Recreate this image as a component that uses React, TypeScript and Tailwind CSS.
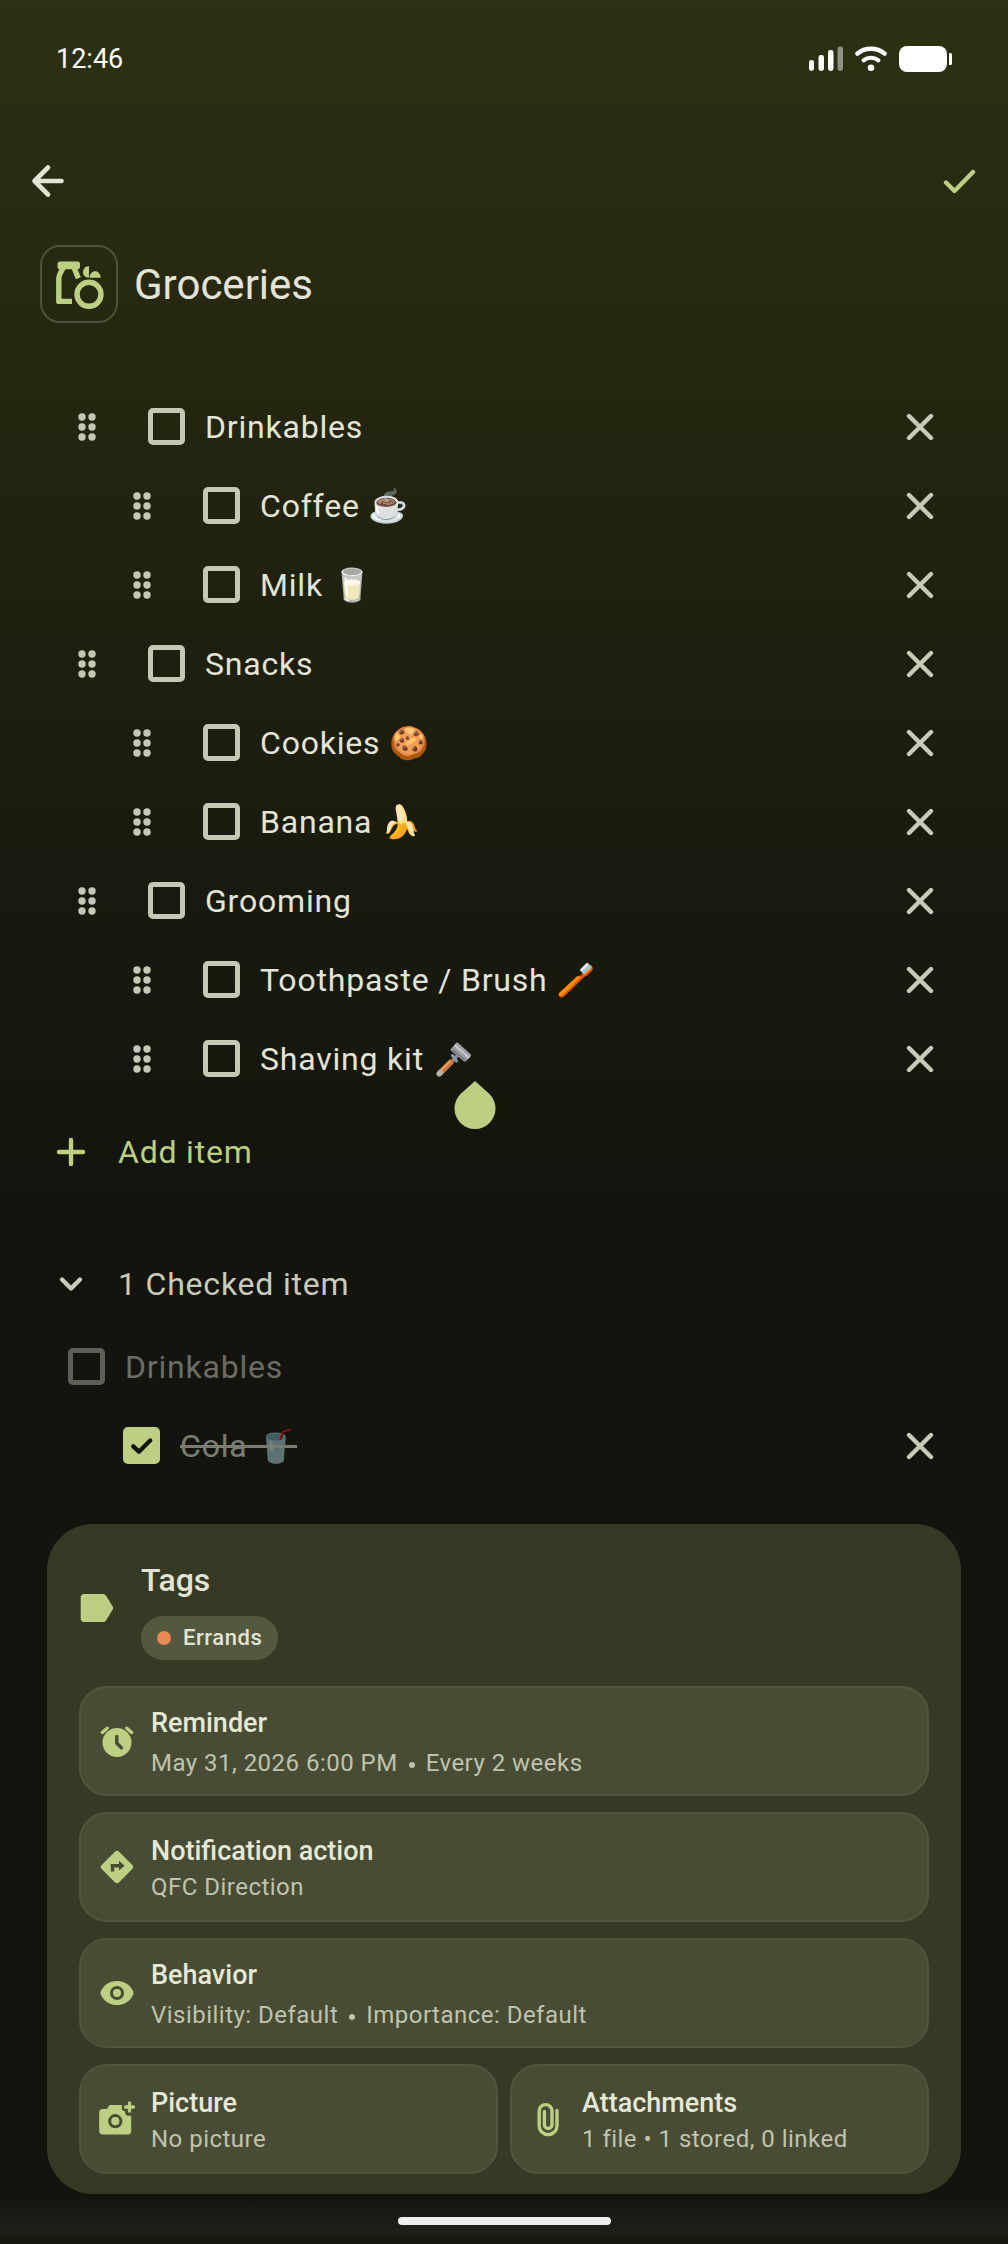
/**
 * Checklist editor: title, draggable items, checked section and the
 * details panel (tags, reminder, action, behavior, picture, attachments).
 */

import { type ReactNode, useState } from "react";

interface Item {
  id: string;
  text: string;
  child?: boolean;
  razor?: boolean;
  caret?: boolean;
}

const ITEMS: Item[] = [
  { id: "drinkables", text: "Drinkables" },
  { id: "coffee", text: "Coffee ☕", child: true },
  { id: "milk", text: "Milk 🥛", child: true },
  { id: "snacks", text: "Snacks" },
  { id: "cookies", text: "Cookies 🍪", child: true },
  { id: "banana", text: "Banana 🍌", child: true },
  { id: "grooming", text: "Grooming" },
  { id: "toothpaste", text: "Toothpaste / Brush 🪥", child: true },
  { id: "shaving", text: "Shaving kit", child: true, razor: true, caret: true },
];

/* ---------- icons ---------- */

function SignalIcon() {
  return (
    <svg width="34" height="26" viewBox="0 0 34 26" fill="#fff" aria-hidden>
      <rect x="0" y="14" width="5" height="11" rx="2.4" />
      <rect x="9.5" y="9" width="5.5" height="16" rx="2.4" />
      <rect x="19" y="4" width="5.5" height="21" rx="2.4" />
      <rect x="28.5" y="0.5" width="5.5" height="24.5" rx="2.4" fill="#8f9182" />
    </svg>
  );
}

function WifiIcon() {
  return (
    <svg width="32" height="26" viewBox="1 0 32 26" fill="none" stroke="#fff" strokeLinecap="round" aria-hidden>
      <path d="M3.4 7.6C11 1.2 23 1.2 30.6 7.6" strokeWidth="4.4" />
      <path d="M9.6 14.3C13.8 10.9 20.2 10.9 24.4 14.3" strokeWidth="4.2" />
      <circle cx="17" cy="21.7" r="3.3" fill="#fff" stroke="none" />
    </svg>
  );
}

function BatteryIcon() {
  return (
    <svg width="53" height="26" viewBox="0 0 53 26" fill="#fff" aria-hidden>
      <rect x="0" y="0" width="48" height="26" rx="8" />
      <path d="M50 7h1.5c1 0 1.5.8 1.5 1.8v8.4c0 1-.5 1.8-1.5 1.8H50z" />
    </svg>
  );
}

function GroceryIcon() {
  return (
    <svg width="50" height="50" viewBox="0 0 50 50" fill="none" stroke="#bccf83" strokeWidth="5.4" aria-hidden>
      <rect x="3.5" y="2.5" width="22.5" height="7.8" rx="2.5" fill="#bccf83" stroke="none" />
      <path d="M9.5 8C8 12.5 4.8 14.500 4.800 19.500V42.400H18" strokeLinejoin="round" />
      <path d="M20 8.5l4.300 10.800" />
      <circle cx="35" cy="35.3" r="12" />
      <path d="M35 7.2v11.3c-3.8 0-6-2.1-6-5.3 0-3.3 2.1-6 6-6z" fill="#bccf83" stroke="none" />
      <path d="M35.5 18.7c.3-4 2.6-6.4 5.7-6.4 3 0 5 2.6 5.6 6.4z" fill="#bccf83" stroke="none" />
    </svg>
  );
}

function DragIcon() {
  return (
    <svg width="18" height="28" viewBox="0 0 18 28" fill="#c6c8b6" aria-hidden>
      {[4, 14, 24].map((y) => (
        <g key={y}>
          <circle cx="4" cy={y} r="3.7" />
          <circle cx="14" cy={y} r="3.7" />
        </g>
      ))}
    </svg>
  );
}

function CloseIcon() {
  return (
    <svg width="28" height="28" viewBox="0 0 28 28" fill="none" stroke="#c9cbb9" strokeWidth="4.4" strokeLinecap="round" aria-hidden>
      <path d="M3 3l22 22M25 3L3 25" />
    </svg>
  );
}

function RazorIcon() {
  return (
    <svg width="36" height="36" viewBox="0 0 36 36" className="ml-3 inline-block align-[-8px]" fill="none" strokeLinecap="round" role="img" aria-label="razor">
      <path d="M15.5 20L22 13" stroke="#75838c" strokeWidth="3.6" />
      <path d="M16.5 13.5l4 5.500" stroke="#8d989f" strokeWidth="3" />
      <path d="M4.5 30.5L14.5 20.5" stroke="#c9763a" strokeWidth="6" />
      <path d="M5.5 28L14 19.5" stroke="#eaa35f" strokeWidth="1.8" />
      <path d="M3.2 31.8L4.4 30.6" stroke="#b4b1aa" strokeWidth="5.6" />
      <path d="M15.2 6.5L19.8 1.200c.8-.8 1.700-.8 2.500-.1L34.500 12c.8.8.8 1.700.1 2.500L30.200 19c-.8.8-1.800.8-2.600.1L15.300 9c-.8-.8-.8-1.700-.1-2.500z" fill="#9a9da1" />
      <path d="M19.5 3.8L32.5 15.2" stroke="#c3c5c8" strokeWidth="2.4" />
      <path d="M17 8.2L29 18" stroke="#6f7377" strokeWidth="1.4" />
    </svg>
  );
}

function LabelIcon() {
  return (
    <svg width="34" height="28" viewBox="0 0 34 28" className="mb-1" fill="#bccf83" aria-hidden>
      <path d="M5 0h19c1.300 0 2.300.6 3 1.600l6.400 10.400c.9 1.300.9 2.700 0 4L27 26.400c-.7 1-1.700 1.600-3 1.600H5c-2 0-3.300-1.400-3.300-3.300V3.300C1.700 1.400 3 0 5 0z" />
    </svg>
  );
}

function AlarmIcon() {
  return (
    <svg width="36" height="36" viewBox="0 0 36 36" fill="none" strokeLinecap="round" strokeLinejoin="round" aria-hidden>
      <circle cx="18" cy="19.5" r="14.5" fill="#bccf83" />
      <path d="M3.3 9.5L8.2 5.2M32.7 9.5L27.8 5.2" stroke="#bccf83" strokeWidth="3.4" />
      <path d="M17.8 13.5v6.700l4.600 4.600" stroke="#484c34" strokeWidth="3.4" />
    </svg>
  );
}

function DirectionIcon() {
  return (
    <svg width="36" height="36" viewBox="0 0 36 36" aria-hidden>
      <path d="M15.9 2.7c1.200-1.200 3-1.200 4.200 0l13.200 13.200c1.200 1.200 1.200 3 0 4.200L20.100 33.300c-1.200 1.200-3 1.200-4.200 0L2.700 20.100c-1.200-1.200-1.200-3 0-4.200z" fill="#bccf83" />
      <path d="M13.5 22.5v-5.800h7" fill="none" stroke="#484c34" strokeWidth="3.4" />
      <path d="M20 11.8l5.600 4.900L20 21.600z" fill="#484c34" />
    </svg>
  );
}

function EyeIcon() {
  return (
    <svg width="36" height="36" viewBox="0 0 36 36" aria-hidden>
      <path d="M18 6c7.300 0 13.300 4 16.300 10.600.4 1 .4 1.800 0 2.800C31.300 26 25.300 30 18 30S4.700 26 1.700 19.400c-.4-1-.4-1.800 0-2.800C4.700 10 10.700 6 18 6z" fill="#bccf83" />
      <circle cx="18" cy="18" r="5.5" fill="none" stroke="#484c34" strokeWidth="3" />
    </svg>
  );
}

function CameraIcon() {
  return (
    <svg width="36" height="36" viewBox="0 0 36 36" aria-hidden>
      <path d="M11.5 4h11.300v2.800c0 2 1.200 3.400 3.300 3.400v1.200c0 2 1.400 3.300 3.400 3.300h2.700v15.600c0 1.900-1.300 3.200-3.200 3.200H3.400c-1.900 0-3.200-1.300-3.200-3.200V11.100c0-1.900 1.300-3.200 3.200-3.200h4.500l2-2.800c.4-.7.9-1.100 1.600-1.100z" fill="#bccf83" />
      <path d="M30.5 2v8M26.5 6h8" stroke="#bccf83" strokeWidth="3.3" strokeLinecap="round" />
      <circle cx="16.3" cy="20.2" r="5.6" fill="none" stroke="#484c34" strokeWidth="3" />
    </svg>
  );
}

function ClipIcon() {
  return (
    <svg width="36" height="36" viewBox="0 0 36 36" fill="none" stroke="#bccf83" strokeWidth="3.4" strokeLinecap="round" aria-hidden>
      <path d="M27 9.5v15.200a8.900 8.900 0 0 1-17.800 0V10a6.400 6.400 0 0 1 12.800 0v13.700a3.800 3.800 0 0 1-7.600 0V10.500" />
    </svg>
  );
}

/* ---------- rows ---------- */

interface CheckProps {
  id: string;
  checked: boolean;
  disabled?: boolean;
  onToggle?: () => void;
}

function Check({ id, checked, disabled, onToggle }: CheckProps) {
  return (
    <span className="grid size-[37px] shrink-0">
      <input
        id={id}
        type="checkbox"
        checked={checked}
        disabled={disabled}
        onChange={onToggle}
        className="peer col-start-1 row-start-1 size-[37px] appearance-none rounded-[5px] border-[5px] border-[#c6c8b6] checked:border-[#bccf83] checked:bg-[#bccf83] disabled:border-[#5d5e55]"
      />
      <svg
        viewBox="0 0 36 36"
        className="pointer-events-none invisible col-start-1 row-start-1 size-[37px] peer-checked:visible"
        fill="none"
        stroke="#13140d"
        strokeWidth="4.2"
        strokeLinecap="round"
        strokeLinejoin="round"
        aria-hidden
      >
        <path d="M10 18.8l5.500 5.200L26.500 13.200" />
      </svg>
    </span>
  );
}

function RemoveButton({ label }: { label: string }) {
  return (
    <button type="button" aria-label={`Remove ${label}`} className="ml-auto grid size-12 place-items-center">
      <CloseIcon />
    </button>
  );
}

function CaretHandle() {
  return (
    <svg width="42" height="48" viewBox="0 0 42 48" className="absolute top-full -right-6 mt-0.5" fill="#bccf83" aria-hidden>
      <path d="M21 0L35.5 13a20.5 20.5 0 1 1-29 0z" />
    </svg>
  );
}

function ItemRow({ item }: { item: Item }) {
  const [checked, setChecked] = useState(false);
  return (
    <li className={`flex h-[79px] items-center pr-16 ${item.child ? "pl-[133px]" : "pl-[78px]"}`}>
      <button type="button" aria-label={`Reorder ${item.text}`} className="mr-[52px] cursor-grab">
        <DragIcon />
      </button>
      <Check id={item.id} checked={checked} onToggle={() => setChecked(!checked)} />
      <label htmlFor={item.id} className="relative ml-5 text-[32px] leading-10 tracking-wide">
        {item.text}
        {item.razor && <RazorIcon />}
        {item.caret && <CaretHandle />}
      </label>
      <RemoveButton label={item.text} />
    </li>
  );
}

/* ---------- details panel ---------- */

interface DetailCardProps {
  icon: ReactNode;
  title: string;
  parts: string[];
}

function DetailCard({ icon, title, parts }: DetailCardProps) {
  const split = parts.length > 1;
  return (
    <button
      type="button"
      className="flex h-[110px] w-full items-center gap-4 rounded-[28px] border-2 border-[#50553d] bg-[#484c34] px-[18px] text-left"
    >
      {icon}
      <span className={`flex min-w-0 flex-col pt-1 ${split ? "gap-2" : "gap-1"}`}>
        <span className="text-[27px] leading-8 font-medium text-[#e6e8d6]">{title}</span>
        <span className="flex items-center gap-[11px] text-2xl leading-8 tracking-[0.02em] text-[#c0c3ad]">
          {parts.map((part, i) => (
            <span key={part} className="flex items-center gap-[11px]">
              {i > 0 && <span className="mt-1 size-1.5 rounded-full bg-[#c0c3ad]" />}
              {part}
            </span>
          ))}
        </span>
      </span>
    </button>
  );
}

export default function App() {
  const [open, setOpen] = useState(true);

  return (
    <div className="flex min-h-screen flex-col bg-[#12130d] bg-[linear-gradient(180deg,#2d3111_0px,#292b12_180px,#22240f_480px,#1a1b0f_840px,#13140d_1200px)] bg-no-repeat font-[Roboto,sans-serif] text-[#e3e4d5]">
      {/* status bar */}
      <div className="flex h-[117px] items-center justify-between px-14 text-white">
        <span className="text-[27px] leading-8">12:46</span>
        <div className="flex items-center gap-3">
          <SignalIcon />
          <WifiIcon />
          <BatteryIcon />
        </div>
      </div>

      <header className="flex h-32 items-center justify-between px-6">
        <button type="button" aria-label="Back" className="grid size-12 place-items-center">
          <svg width="34" height="34" viewBox="0 0 34 34" fill="none" stroke="#e3e4d5" strokeWidth="4.6" strokeLinecap="round" strokeLinejoin="round" aria-hidden>
            <path d="M17 3.5L3.5 17L17 30.5M4 17h26.500" />
          </svg>
        </button>
        <button type="button" aria-label="Save" className="grid size-12 place-items-center">
          <svg width="34" height="34" viewBox="0 0 34 34" fill="none" stroke="#bccf83" strokeWidth="4.4" strokeLinecap="round" strokeLinejoin="round" aria-hidden>
            <path d="M3 18.5l8.500 8.500L30 8" />
          </svg>
        </button>
      </header>

      <div className="flex items-center gap-4 px-10">
        <button type="button" aria-label="Change icon" className="grid size-[78px] place-items-center rounded-[20px] border-2 border-[#4f503d]">
          <GroceryIcon />
        </button>
        <h1 className="pt-0.5 text-[42px] leading-[52px]">Groceries</h1>
      </div>

      <ul className="mt-16">
        {ITEMS.map((item) => (
          <ItemRow key={item.id} item={item} />
        ))}
      </ul>

      <button type="button" className="mt-[14px] flex h-20 items-center gap-8 pl-14 text-[32px] leading-10 tracking-wide text-[#bccf83]">
        <svg width="30" height="30" viewBox="0 0 30 30" fill="none" stroke="#bccf83" strokeWidth="4.4" strokeLinecap="round" aria-hidden>
          <path d="M15 3v24M3 15h24" />
        </svg>
        Add item
      </button>

      <button
        type="button"
        aria-expanded={open}
        onClick={() => setOpen(!open)}
        className="mt-[52px] flex h-20 items-center gap-8 pl-14 text-[32px] leading-10 tracking-wide text-[#c9cbba]"
      >
        <svg width="30" height="30" viewBox="0 0 30 30" fill="none" stroke="#c9cbba" strokeWidth="4.4" strokeLinecap="round" strokeLinejoin="round" aria-hidden>
          <path d="M6 10.5l9 9l9-9" />
        </svg>
        1 Checked item
      </button>

      {open && (
        <ul className="mt-[3px]">
          <li className="flex h-[79px] items-center pr-16 pl-[68px]">
            <Check id="parent" checked={false} disabled />
            <label htmlFor="parent" className="ml-5 text-[32px] leading-10 tracking-wide text-[#6b6c63]">
              Drinkables
            </label>
          </li>
          <li className="flex h-[79px] items-center pr-16 pl-[123px]">
            <Check id="cola" checked onToggle={() => undefined} />
            <label htmlFor="cola" className="ml-5 text-[32px] leading-10 tracking-wide line-through opacity-50">
              Cola 🥤
            </label>
            <RemoveButton label="Cola" />
          </li>
        </ul>
      )}

      <section className="mx-[47px] mt-[39px] flex flex-col gap-4 rounded-[46px] bg-[#363a24] px-8 pt-9 pb-5">
        <div className="mb-[10px] flex items-center gap-7">
          <LabelIcon />
          <div className="flex flex-col items-start gap-4">
            <h2 className="text-[32px] leading-10 font-medium">Tags</h2>
            <span className="flex h-11 items-center gap-3 rounded-full bg-[#53593f] px-4 text-[22px] leading-8 font-medium tracking-wide">
              <span className="size-3.5 rounded-full bg-[#e98a54]" />
              Errands
            </span>
          </div>
        </div>

        <DetailCard icon={<AlarmIcon />} title="Reminder" parts={["May 31, 2026 6:00 PM", "Every 2 weeks"]} />
        <DetailCard icon={<DirectionIcon />} title="Notification action" parts={["QFC Direction"]} />
        <DetailCard icon={<EyeIcon />} title="Behavior" parts={["Visibility: Default", "Importance: Default"]} />
        <div className="grid grid-cols-2 gap-3">
          <DetailCard icon={<CameraIcon />} title="Picture" parts={["No picture"]} />
          <DetailCard icon={<ClipIcon />} title="Attachments" parts={["1 file • 1 stored, 0 linked"]} />
        </div>
      </section>

      {/* gesture bar */}
      <div className="flex h-[49px] grow items-center justify-center bg-linear-to-b from-[#12130d] via-[#1d2018] via-75% to-[#171810] pt-1">
        <div className="h-2 w-[213px] rounded-full bg-[#eeeeee]" />
      </div>
    </div>
  );
}
